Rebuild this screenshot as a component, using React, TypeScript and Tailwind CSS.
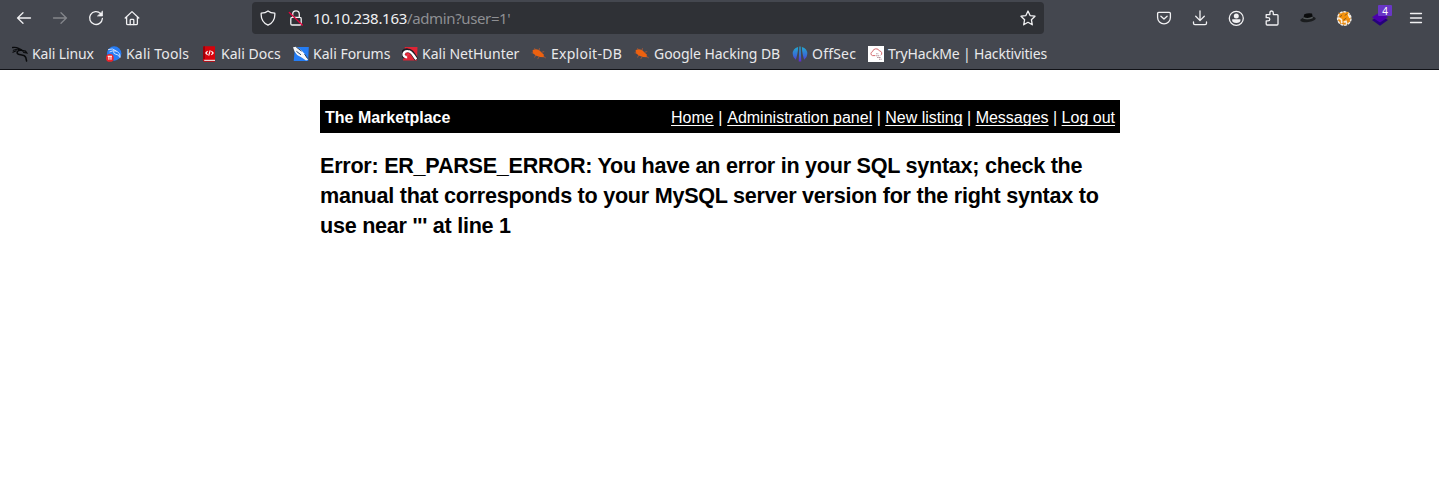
import type { ReactNode } from 'react';

function Stroke({ children, className = 'text-[#f1f1f3]' }: { children: ReactNode; className?: string }) {
  return (
    <svg className={`block h-4 w-4 shrink-0 ${className}`} viewBox="0 0 16 16" fill="none" stroke="currentColor" strokeWidth="1.3" strokeLinecap="round" strokeLinejoin="round">
      {children}
    </svg>
  );
}

function Favicon({ children }: { children: ReactNode }) {
  return (
    <svg className="block h-4 w-4 shrink-0" viewBox="0 0 16 16" fill="none">
      {children}
    </svg>
  );
}

const BackIcon = () => (
  <Stroke><path d="M1.5 8H14.5M7 2.8L1.6 8L7 13.2" /></Stroke>
);
const ForwardIcon = () => (
  <Stroke className="text-[#84868b]"><path d="M1.5 8H14.5M9 2.8L14.4 8L9 13.2" /></Stroke>
);
const ReloadIcon = () => (
  <Stroke>
    <path d="M12.6 3.6A6.4 6.4 0 1 0 14.4 8.5" />
    <path d="M14.5 1.4V6H9.8Z" fill="currentColor" strokeWidth="0.7" />
  </Stroke>
);
const HomeIcon = () => (
  <Stroke>
    <path d="M1.2 8L8 1.6L14.8 8M2.6 7V13.4Q2.6 14.7 3.9 14.7H12.1Q13.4 14.7 13.4 13.4V7" />
    <path d="M6.2 14.5V10.2Q6.2 9.4 7 9.4H9Q9.8 9.4 9.8 10.2V14.5" />
  </Stroke>
);
const ShieldIcon = () => (
  <Stroke><path d="M8 .9C6.3 2.3 3.8 3 1.2 3.1C.9 7 1.6 12.2 8 15.2C14.4 12.2 15.1 7 14.8 3.1C12.2 3 9.7 2.3 8 .9Z" /></Stroke>
);
const LockIcon = () => (
  <Stroke>
    <path d="M4.7 7.4V4.2A3.3 3.3 0 0 1 11.3 4.2V7.4M4.1 7.4H11.9Q13.2 7.4 13.2 8.7V13.7Q13.2 15 11.9 15H4.1Q2.8 15 2.8 13.7V8.7Q2.8 7.4 4.1 7.4Z" />
    <path d="M1.3 2.5L14.3 15" stroke="#e4033d" strokeWidth="1.3" />
  </Stroke>
);
const StarIcon = () => (
  <Stroke><path d="M8 1L10.1 5.6L15 6.2L11.4 9.7L12.3 14.8L8 12.3L3.7 14.8L4.6 9.7L1 6.2L5.9 5.6Z" /></Stroke>
);
const PocketIcon = () => (
  <Stroke><path d="M2.7 2.4H13.3Q14.4 2.4 14.4 3.5V7.4A6.4 6.4 0 0 1 1.6 7.4V3.5Q1.6 2.4 2.7 2.4ZM4.9 6.3L8 9.1L11.1 6.3" /></Stroke>
);
const DownloadIcon = () => (
  <Stroke><path d="M8 .8V10.4M3.7 6.3L8 10.6L12.3 6.3M1.5 12V13.2Q1.5 14.6 2.9 14.6H13.1Q14.5 14.6 14.5 13.2V12" /></Stroke>
);
const AccountIcon = () => (
  <Stroke>
    <circle cx="8.3" cy="8.3" r="7" />
    <circle cx="8.3" cy="5.9" r="2.5" fill="currentColor" stroke="none" />
    <path d="M4.2 9.3H12.4V10.3Q12.4 13 8.3 13T4.2 10.3Z" fill="currentColor" stroke="none" />
  </Stroke>
);
const ExtensionIcon = () => (
  <Stroke><path d="M2.2 4.6H5.9V2.9Q5.9 1 7.6 1T9.3 2.9V4.6H13Q14 4.6 14 5.6V14Q14 15 13 15H3.2Q2.2 15 2.2 14V10.9H4Q5.8 10.9 5.8 9.3T4 7.7H2.2Z" /></Stroke>
);
const MenuIcon = () => (
  <Stroke><path d="M2.5 3.5H13.5M2.5 8H13.5M2.5 12.5H13.5" strokeWidth="1.3" /></Stroke>
);
const HatIcon = () => (
  <Favicon>
    <ellipse cx="8" cy="9.4" rx="7.8" ry="2.7" fill="#1b1d1f" transform="rotate(-7 8 9.4)" />
    <path d="M3.2 8.8L4.3 4.3Q8 2.7 12 3.6L13.1 8.6Q8 11 3.2 8.8Z" fill="#0b0c0d" />
    <path d="M3.5 7.1Q8 9 12.7 6.6L13 8.2Q8 10.4 3.2 8.8Z" fill="#53585a" />
  </Favicon>
);
const FoxIcon = () => (
  <Favicon>
    <circle cx="8.3" cy="8.5" r="6.7" fill="#e78b16" stroke="#f1ede6" strokeWidth="1.4" strokeDasharray="3 .8" />
    <path d="M2 2.5L6 4L12.5 1.8L12 6.2L14 9L9.5 9.6L6.5 13.5L2.7 9.2L5 6Z" fill="#f6930c" />
    <path d="M2.2 7.8L5.4 9.5L5.8 13.1M7.6 12.2L10 11.3L10.8 14M12.3 4.1L14 7.8" stroke="#f8eee0" strokeWidth="1.6" />
    <path d="M5.8 4.8L4.4 7M8.7 5.5L11.3 3.7M7.3 10.2L10.4 8" stroke="#704b22" strokeWidth=".8" />
  </Favicon>
);
const LayersIcon = () => (
  <Favicon>
    <path d="M0 10L8 5L16 10L8 15.8Z" fill="#26017c" />
    <path d="M0 7.2L8 2L16 7.2L8 12.6Z" fill="#4b00ae" />
  </Favicon>
);

const KaliIcon = () => (
  <Favicon>
    <g stroke="#090a0c" strokeLinecap="round">
      <path d="M.7 1.5Q4 .9 7 2.7Q9 3.7 11 5" strokeWidth="1.4" />
      <path d="M1.2 4.2Q5 2 9.4 4.2" strokeWidth="1" />
      <path d="M8.5 4.2C5 4.2 4.2 7.2 6.4 8.3C8.4 9.2 12.5 8.2 13.8 11.5L14.6 15" strokeWidth="1.5" />
      <path d="M9.4 4.4L13.5 5.1L15 7.1L11.5 6.5M.9 6.3L4.2 4.7" strokeWidth="1.1" />
    </g>
  </Favicon>
);
const ToolsIcon = () => (
  <Favicon>
    <circle cx="8.2" cy="7.5" r="7.2" fill="#267cf5" />
    <path d="M2 3.7Q6.5 1.6 10.4 5M3.5 6Q8 3.4 11.2 5.5Q14.5 7 14.2 11.5M7.7 5Q7 8 10 8.3Q13.4 8.5 13.7 11.5" stroke="#d7e8ff" strokeWidth=".9" />
    <circle cx="3.9" cy="11.9" r="3.9" fill="#ed252b" />
    <path d="M1.7 10.3H6M2.9 10.4V13.8M5 10.4V13.8" stroke="#fff" strokeWidth="1.1" />
  </Favicon>
);
const DocsIcon = () => (
  <Favicon>
    <path d="M2 1.5Q2 .2 3.3 .2H14V15.7H3.5Q2 15.7 2 14.3Z" fill="#d5030c" />
    <path d="M2 1.5Q2 .2 3.3 .2H4V13H2Z" fill="#9b0008" />
    <path d="M3.2 13.8H14V14.9H3.2Z" fill="#eee" />
    <path d="M6.6 5.2L4.8 7L6.6 8.8M10.4 5.2L12.2 7L10.4 8.8M9.2 4.3L7.7 9.6" stroke="#fff" strokeWidth="1.1" />
  </Favicon>
);
const ForumsIcon = () => (
  <Favicon>
    <path d="M2 1H15.8L15.2 15H.7Z" fill="#247df5" />
    <path d="M0 1.2L3.2 .7L8.3 4.3L12 8.3L15 13.7L13 14.4L8.7 11.5L4.2 8.9L1.6 5.4Z" fill="#f7f8fa" />
    <path d="M3.2 1L8.6 5.2M3.4 5.3L8 8.8M11.5 8L14.5 12.5" stroke="#18304d" strokeWidth=".9" />
  </Favicon>
);
const NetHunterIcon = () => (
  <Favicon>
    <path d="M2.8 1H15.5L15 14.5H1Z" fill="#de2435" />
    <path d="M3 10.8C-1.5 9 1.1 3.7 6 4.4C10.2 4.8 11 8.2 14.5 13.5" stroke="#1d1d24" strokeWidth="4" />
    <path d="M5.2 11.2C-.5 10.8 1.1 4.9 5.8 5.1C9.8 5.1 10.6 8.5 14.3 13.2" stroke="#fff" strokeWidth="2.4" />
    <path d="M5.5 10.8Q4.7 8.3 7.4 8.3" stroke="#e83949" strokeWidth="1.4" />
  </Favicon>
);
const BugIcon = () => (
  <Favicon>
    <path d="M1.5 4.5Q4 2.1 8 4.1L12.4 8.3L13.3 11.3L8.9 11.1L4.6 9.4L2.2 7.3Z" fill="#ed610f" />
    <path d="M5 4L3.4 2.2M8 4.6L8.5 2.2M10.4 6.3L13.2 5.6M4.8 9L3.5 11.5M8.3 10.6L6.6 13.1M2.4 6.9L.6 6.8M12.2 10.2L14.8 12" stroke="#b15835" strokeWidth=".8" />
  </Favicon>
);
const OffSecIcon = () => (
  <Favicon>
    <defs>
      <linearGradient id="offsec" x1="8" x2="8" y1="0" y2="16" gradientUnits="userSpaceOnUse">
        <stop stopColor="#20afd0" /><stop offset=".6" stopColor="#386bd5" /><stop offset="1" stopColor="#6424cf" />
      </linearGradient>
    </defs>
    <path d="M6.1 1Q.6 2.5 .7 8Q.9 11.8 3.8 13.8C4.7 10.8 6.1 6 6.1 1ZM9.9 1Q15.4 2.5 15.3 8Q15.1 11.8 12.2 13.8C11.3 10.8 9.9 6 9.9 1ZM7.4 .5H8.6L9.3 15.5H6.7Z" fill="url(#offsec)" />
  </Favicon>
);
const CloudIcon = () => (
  <Favicon>
    <path d="M0 0H16V16H0Z" fill="#fff" />
    <path d="M7.4 9.6H4.5A2 2 0 0 1 4.5 5.7A3.7 3.7 0 0 1 11.5 5A2.3 2.3 0 0 1 12.6 9.3" stroke="#d56b70" strokeWidth="1" />
    <path d="M8.2 7.8H10.4M8.2 9.7H11.2M9.2 11.5H12.5M11 13.2H13.6" stroke="#ad8790" strokeWidth="1.1" strokeDasharray="1.4 .5" />
  </Favicon>
);

const bookmarks = [
  { label: 'Kali Linux', icon: <KaliIcon />, style: 'w-[94px] tracking-[-0.13px]' },
  { label: 'Kali Tools', icon: <ToolsIcon />, style: 'w-[95px] tracking-[0.18px]' },
  { label: 'Kali Docs', icon: <DocsIcon />, style: 'w-[92px] tracking-[0.03px]' },
  { label: 'Kali Forums', icon: <ForumsIcon />, style: 'w-[109px]' },
  { label: 'Kali NetHunter', icon: <NetHunterIcon />, style: 'w-[129px]' },
  { label: 'Exploit-DB', icon: <BugIcon />, style: 'w-[103px] tracking-[0.27px]' },
  { label: 'Google Hacking DB', icon: <BugIcon />, style: 'w-[158px] tracking-[-0.06px]' },
  { label: 'OffSec', icon: <OffSecIcon />, style: 'w-[76px] tracking-[0.2px]' },
  { label: 'TryHackMe | Hacktivities', icon: <CloudIcon />, style: 'w-[200px] tracking-[-0.17px]' },
];

const links = ['Home', 'Administration panel', 'New listing', 'Messages', 'Log out'];

function BrowserChrome() {
  return (
    <header className="h-[70px] border-b border-[#111217] bg-[#44474f] font-['Noto_Sans',sans-serif] text-[#e9e9eb]">
      <div className="flex h-9 items-center pl-4">
        <div className="flex w-[236px] gap-5">
          <BackIcon /><ForwardIcon /><ReloadIcon /><HomeIcon />
        </div>
        <div className="flex h-8 w-[792px] items-center rounded bg-[#2f3136] px-2">
          <ShieldIcon />
          <div className="ml-3"><LockIcon /></div>
          <div className="ml-[9px] flex-1 whitespace-pre text-[15px] leading-5 tracking-[-0.37px] text-[#8e8f93]">
            <span className="tracking-[-0.3px] text-[#f0f0f2]">10.10.238.163</span>/admin?user=1'
          </div>
          <StarIcon />
        </div>
        <div className="ml-28 flex gap-5">
          <PocketIcon /><DownloadIcon /><AccountIcon /><ExtensionIcon /><HatIcon /><FoxIcon />
          <div className="relative">
            <LayersIcon />
            <span className="absolute -top-[5px] left-[6px] flex h-[11px] w-[14px] items-center justify-center rounded-[1px] bg-[#6937c5] text-[10px] leading-none text-white">4</span>
          </div>
          <MenuIcon />
        </div>
      </div>
      <nav className="flex h-[34px] items-center pt-0.5 pl-3">
        {bookmarks.map(({ label, icon, style }) => (
          <a key={label} className={`flex shrink-0 items-center gap-1 whitespace-nowrap text-[14px] leading-5 ${style}`}>
            {icon}<span>{label}</span>
          </a>
        ))}
      </nav>
    </header>
  );
}

export default function App() {
  return (
    <div className="h-[477px] overflow-hidden bg-white">
      <BrowserChrome />
      <main className="mt-[30px] ml-[320px] w-[800px] font-['Liberation_Sans',Arial,sans-serif] text-black">
        <div className="flex h-[33px] items-center justify-between bg-black px-[5px] pt-0.5 text-base leading-6 text-white">
          <strong>The Marketplace</strong>
          <div className="whitespace-pre">
            {links.map((link, i) => (
              <span key={link}>
                {i > 0 && <span className={i === 1 ? 'tracking-[0.15px]' : ''}>{' | '}</span>}
                <a className="underline decoration-1 underline-offset-2 [text-decoration-skip-ink:none]">{link}</a>
              </span>
            ))}
          </div>
        </div>
        <h1 className="mt-[18px] text-[21.6px] leading-[30px] font-bold tracking-[-0.265px]">
          Error: ER_PARSE_ERROR: You have an error in your SQL syntax; check the manual that corresponds to your MySQL server version for the right syntax to use near ''' at line 1
        </h1>
      </main>
    </div>
  );
}
